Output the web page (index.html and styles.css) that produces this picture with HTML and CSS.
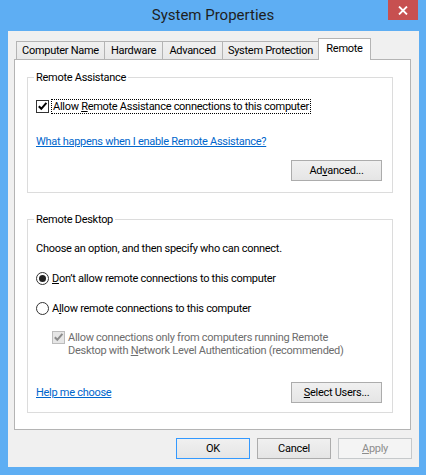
FILE: index.html
```html
<!DOCTYPE html>
<html lang="en">
<head>
    <meta charset="UTF-8">
    <title>System Properties</title>
    <link rel="stylesheet" href="styles.css">
</head>
<body>

<div class="window">
    <div class="titlebar">
        <div class="title">System Properties</div>
        <button class="close" title="Close">
            <svg width="10" height="9" viewBox="0 0 10 9"><path d="M1 0.5 L9 8.5 M9 0.5 L1 8.5" stroke="#fff" stroke-width="1.8" fill="none"/></svg>
        </button>
    </div>

    <div class="client">
        <div class="tabs">
            <div class="tab tab-name">Computer Name</div>
            <div class="tab tab-hardware">Hardware</div>
            <div class="tab tab-advanced">Advanced</div>
            <div class="tab tab-protection">System Protection</div>
            <div class="tab tab-remote selected">Remote</div>
        </div>

        <div class="panel">
            <fieldset class="group">
                <legend>Remote Assistance</legend>
                <div class="check-row">
                    <span class="box">
                        <svg width="11" height="11" viewBox="0 0 11 11"><path d="M1.8 5.2 L4.3 7.8 L9.4 1.8" stroke="#000" stroke-width="2" fill="none"/></svg>
                    </span>
                    <span class="focus">Allow <u>R</u>emote Assistance connections to this computer</span>
                </div>
                <a class="link link-assist" href="#">What happens when I enable Remote Assistance?</a>
                <div class="btn-row">
                    <button class="btn">Ad<u>v</u>anced...</button>
                </div>
            </fieldset>

            <fieldset class="group group-desktop">
                <legend>Remote Desktop</legend>
                <div class="intro">Choose an option, and then specify who can connect.</div>
                <div class="radio-row">
                    <span class="radio on"></span>
                    <span><u>D</u>on’t allow remote connections to this computer</span>
                </div>
                <div class="radio-row">
                    <span class="radio"></span>
                    <span>A<u>l</u>low remote connections to this computer</span>
                </div>
                <div class="sub">
                    <span class="box disabled">
                        <svg width="11" height="11" viewBox="0 0 11 11"><path d="M1.8 5.2 L4.3 7.8 L9.4 1.8" stroke="#8c8c8c" stroke-width="2" fill="none"/></svg>
                    </span>
                    <span>Allow connections only from computers running Remote<br>Desktop with <u>N</u>etwork Level Authentication (recommended)</span>
                </div>
                <div class="footer-row">
                    <a class="link" href="#">Help me choose</a>
                    <button class="btn"><u>S</u>elect Users...</button>
                </div>
            </fieldset>
        </div>

        <div class="dialog-buttons">
            <button class="btn dbtn default">OK</button>
            <button class="btn dbtn">Cancel</button>
            <button class="btn dbtn" disabled><u>A</u>pply</button>
        </div>
    </div>
</div>

</body>
</html>
```

FILE: styles.css
```css
body {
    margin: 0;
    font-family: "Segoe UI", Roboto, "Liberation Sans", sans-serif;
    font-size: 11px;
    letter-spacing: -0.28px;
    color: #000;
}
.window {
    width: 426px;
    height: 475px;
    box-sizing: border-box;
    background-color: #5eaef3;
    padding: 0 7px 8px 8px;
    display: flex;
    flex-direction: column;
}
.titlebar {
    display: grid;
    grid-template-columns: 1fr auto 1fr;
    height: 31px;
    margin: 0 -7px 0 -8px;
    padding: 0 8px;
}
.title {
    grid-column: 2;
    font-size: 15px;
    letter-spacing: 0;
    line-height: 30px;
    color: #1e1e1e;
}
.close {
    grid-column: 3;
    justify-self: end;
    width: 30px;
    height: 20px;
    padding: 0;
    border: none;
    background-color: #c75050;
    display: flex;
    align-items: center;
    justify-content: center;
}
.client {
    flex: 1;
    background-color: #f0f0f0;
    padding: 7px 8px 0 6px;
}

/* tabs */
.tabs {
    display: flex;
    align-items: flex-end;
    height: 21px;
    padding-left: 2px;
}
.tab {
    box-sizing: border-box;
    height: 18px;
    line-height: 17px;
    text-align: center;
    border: 1px solid #b4b4b4;
    border-bottom: none;
    background: linear-gradient(#f0f0f0, #e8e8e8);
    margin-left: -1px;
}
.tab-name { width: 89px; margin-left: 0; }
.tab-hardware { width: 59px; }
.tab-advanced { width: 61px; }
.tab-protection { width: 97px; }
.tab-remote { width: 53px; }
.tab.selected {
    height: 22px;
    line-height: 19px;
    background: #fff;
    margin-bottom: -1px;
    position: relative;
    z-index: 1;
}
.panel {
    box-sizing: border-box;
    height: 371px;
    border: 1px solid #b4b4b4;
    background-color: #fff;
    padding: 10px 17px 0 12px;
}

/* group boxes */
.group {
    margin: 0;
    border: 1px solid #dcdcdc;
    padding: 14px 10px 11px 8px;
}
.group legend {
    padding: 0 2px;
    margin-left: -2px;
    line-height: 15px;
}
.group-desktop {
    margin-top: 19px;
    padding-bottom: 9px;
}
.check-row {
    display: flex;
    align-items: center;
    height: 15px;
}
.box {
    box-sizing: border-box;
    width: 13px;
    height: 13px;
    border: 1px solid #333;
    background-color: #fff;
    display: flex;
    align-items: center;
    justify-content: center;
    flex-shrink: 0;
}
.box.disabled {
    border-color: #bcbcbc;
    background-color: #e6e6e6;
    margin-right: 3px;
}
.focus {
    margin-left: 2px;
    border: 1px dotted #000;
    padding: 0 1px;
    line-height: 13px;
}
.link {
    color: #0066cc;
    text-decoration: underline;
    line-height: 15px;
}
.link-assist {
    display: block;
    margin-top: 20px;
}
.btn-row {
    display: flex;
    justify-content: flex-end;
    margin-top: 11px;
}
.btn {
    box-sizing: border-box;
    width: 91px;
    height: 21px;
    padding: 0;
    border: 1px solid #acacac;
    background: linear-gradient(#f0f0f0, #e5e5e5);
    font: inherit;
    letter-spacing: inherit;
    color: #000;
}
.intro {
    line-height: 15px;
}
.radio-row {
    display: flex;
    align-items: center;
    height: 15px;
    margin-top: 15px;
}
.radio {
    box-sizing: border-box;
    width: 13px;
    height: 13px;
    border: 1px solid #333;
    border-radius: 50%;
    background-color: #fff;
    margin-right: 3px;
    display: flex;
    align-items: center;
    justify-content: center;
}
.radio.on::after {
    content: "";
    width: 7px;
    height: 7px;
    border-radius: 50%;
    background-color: #222;
}
.sub {
    display: flex;
    margin: 15px 0 0 16px;
    line-height: 13px;
    color: #6d6d6d;
}
.footer-row {
    display: flex;
    justify-content: space-between;
    align-items: center;
    margin-top: 25px;
}

/* dialog buttons */
.dialog-buttons {
    display: flex;
    justify-content: flex-end;
    gap: 7px;
    margin: 8px -1px 0 0;
}
.dbtn {
    width: 74px;
}
.btn.default {
    border-color: #3399ff;
}
.btn[disabled] {
    background: #f4f4f4;
    border-color: #c6c9cb;
    color: #8d8d8d;
}
```
